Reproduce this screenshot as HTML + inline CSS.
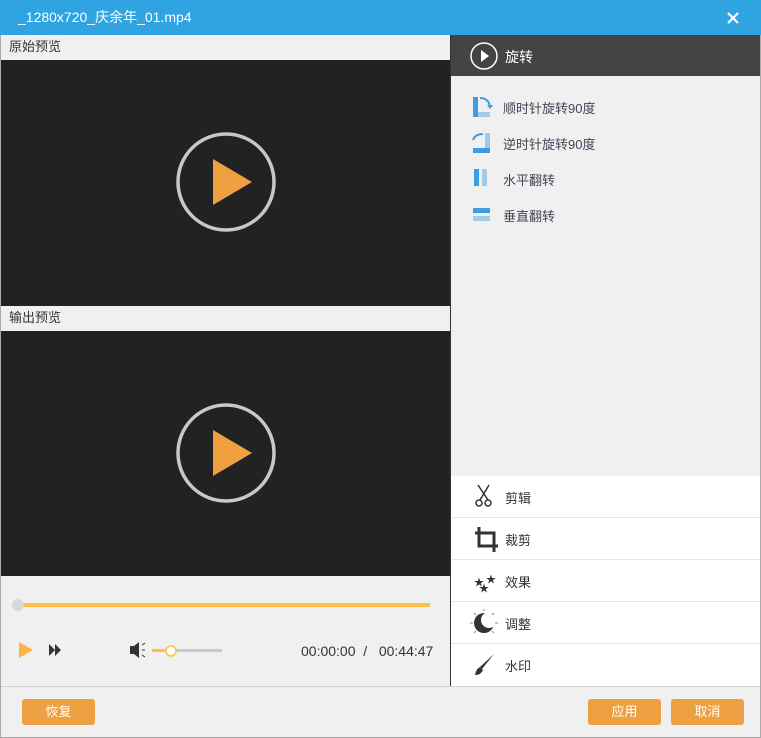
<!DOCTYPE html>
<html><head><meta charset="utf-8"><style>
*{margin:0;padding:0;box-sizing:border-box}
body{width:761px;height:738px;overflow:hidden;background:#f0f0f0;font-family:"Liberation Sans","Noto Sans CJK SC",sans-serif;font-size:13px;color:#333;position:relative}
.a{position:absolute}
</style></head><body>
<div class="a" style="left:0;top:0;width:761px;height:35px;background:#2fa4e0;color:#fff;font-size:14px;line-height:35px;padding-left:18px">_1280x720_庆余年_01.mp4</div>
<svg class="a" style="left:727px;top:12px" width="12" height="12"><path d="M1,1 L11,11 M11,1 L1,11" stroke="#fff" stroke-width="2.2"/></svg>
<div class="a" style="left:0;top:35px;width:1px;height:703px;background:#aaa"></div>
<div class="a" style="right:0;top:35px;width:1px;height:703px;background:#aaa"></div>
<div class="a" style="left:0;bottom:0;width:761px;height:1px;background:#aaa"></div>
<div class="a" style="left:9px;top:37px;line-height:20px">原始预览</div>
<div class="a" style="left:1px;top:60px;width:449px;height:246px;background:#222"></div>
<div class="a" style="left:9px;top:308px;line-height:20px">输出预览</div>
<div class="a" style="left:1px;top:331px;width:449px;height:245px;background:#222"></div>
<svg class="a" style="left:0;top:0" width="450" height="738">
<circle cx="226" cy="182" r="48" fill="none" stroke="#c8c8c8" stroke-width="3.5"/>
<polygon points="213,159 252,182 213,205" fill="#f0a040"/>
<circle cx="226" cy="453" r="48" fill="none" stroke="#c8c8c8" stroke-width="3.5"/>
<polygon points="213,430 252,453 213,476" fill="#f0a040"/>
<rect x="18" y="603" width="412" height="4" fill="#fdbf45"/>
<circle cx="18" cy="605" r="6" fill="#d8d8d8"/>
<polygon points="19,642 33,650 19,658" fill="#fdb34a"/>
<polygon points="49,644 55,650 49,656" fill="#333"/><polygon points="55,644 61,650 55,656" fill="#333"/>
<rect x="130" y="646" width="4" height="8" fill="#333"/><polygon points="134,646 139,642 139,658 134,654" fill="#333"/>
<path d="M142,645 l3,-2 M142,650 h3 M142,655 l3,2" stroke="#333" stroke-width="1"/>
<rect x="152" y="649" width="70" height="3" fill="#c8c8c8"/>
<rect x="152" y="649" width="20" height="3" fill="#fdbf45"/>
<circle cx="171" cy="651" r="5" fill="#fff" stroke="#fdbf45" stroke-width="1.5"/>
</svg>
<div class="a" style="left:301px;top:643px;font-size:14px">00:00:00 &nbsp;/ &nbsp;&nbsp;00:44:47</div>
<div class="a" style="left:1px;top:686px;width:759px;height:1px;background:#d0d0d0"></div>
<div class="a" style="left:22px;top:699px;width:73px;height:26px;background:#eca042;border-radius:3px;color:#fff;text-align:center;line-height:26px">恢复</div>
<div class="a" style="left:588px;top:699px;width:73px;height:26px;background:#eca042;border-radius:3px;color:#fff;text-align:center;line-height:26px">应用</div>
<div class="a" style="left:671px;top:699px;width:73px;height:26px;background:#eca042;border-radius:3px;color:#fff;text-align:center;line-height:26px">取消</div>
<div class="a" style="left:450px;top:35px;width:310px;height:41px;background:#444"></div>
<div class="a" style="left:450px;top:35px;width:1px;height:651px;background:#333"></div>
<div class="a" style="left:505px;top:47px;color:#fff;font-size:14px">旋转</div>
<div class="a" style="left:451px;top:76px;width:309px;height:399px;background:#f0f0f0"></div>
<div class="a" style="left:503px;top:98px;color:#445">顺时针旋转90度</div>
<div class="a" style="left:503px;top:134px;color:#445">逆时针旋转90度</div>
<div class="a" style="left:503px;top:170px;color:#445">水平翻转</div>
<div class="a" style="left:503px;top:206px;color:#445">垂直翻转</div>
<div class="a" style="left:451px;top:476px;width:309px;height:210px;background:#fff"></div>
<div class="a" style="left:451px;top:517px;width:309px;height:1px;background:#e6e6e6"></div>
<div class="a" style="left:451px;top:559px;width:309px;height:1px;background:#e6e6e6"></div>
<div class="a" style="left:451px;top:601px;width:309px;height:1px;background:#e6e6e6"></div>
<div class="a" style="left:451px;top:643px;width:309px;height:1px;background:#e6e6e6"></div>
<div class="a" style="left:505px;top:488px">剪辑</div>
<div class="a" style="left:505px;top:530px">裁剪</div>
<div class="a" style="left:505px;top:572px">效果</div>
<div class="a" style="left:505px;top:614px">调整</div>
<div class="a" style="left:505px;top:656px">水印</div>
<svg class="a" style="left:450px;top:35px" width="311" height="651">
<circle cx="34" cy="21" r="13" fill="none" stroke="#fff" stroke-width="1.5"/>
<polygon points="31,15 39,21 31,27" fill="#fff"/>
<rect x="23" y="62" width="5" height="20" fill="#3e9ddc"/><rect x="28" y="77" width="12" height="5" fill="#9ccbeb"/>
<path d="M30,63 q8,0 10,8" fill="none" stroke="#3e9ddc" stroke-width="2"/><polygon points="37,70 43,70 40,74" fill="#3e9ddc"/>
<rect x="35" y="98" width="5" height="20" fill="#9ccbeb"/><rect x="23" y="113" width="17" height="5" fill="#3e9ddc"/>
<path d="M33,99 q-8,0 -10,6" fill="none" stroke="#3e9ddc" stroke-width="2"/>
<rect x="24" y="134" width="5" height="17" fill="#3e9ddc"/><rect x="32" y="134" width="5" height="17" fill="#9ccbeb"/>
<rect x="23" y="173" width="17" height="5" fill="#3e9ddc"/><rect x="23" y="181" width="17" height="5" fill="#9ccbeb"/>
<g stroke="#333" stroke-width="1.5" fill="none">
<line x1="28" y1="450" x2="38" y2="465"/><line x1="39" y1="450" x2="30" y2="465"/>
<circle cx="29" cy="468" r="3"/><circle cx="38" cy="468" r="3"/>
</g>
<path d="M29,492 v19 h19 M25,498 h19 v19" fill="none" stroke="#333" stroke-width="3"/>
<text x="24" y="551" font-size="10" fill="#333">★</text><text x="36" y="548" font-size="10" fill="#333">★</text><text x="29" y="557" font-size="10" fill="#333">★</text>
<circle cx="34" cy="588" r="10" fill="#333"/><circle cx="39" cy="585" r="8" fill="#fff"/>
<g stroke="#888" stroke-width="1"><line x1="20" y1="588" x2="23" y2="588"/><line x1="45" y1="588" x2="48" y2="588"/><line x1="34" y1="574" x2="34" y2="576"/><line x1="24" y1="578" x2="26" y2="580"/><line x1="44" y1="578" x2="42" y2="580"/><line x1="24" y1="598" x2="26" y2="596"/><line x1="44" y1="598" x2="42" y2="596"/></g>
<path d="M44,619 L32,634 l-2,-2 Z" fill="#333"/><path d="M30,632 q-4,2 -5,8 q6,0 8,-5 Z" fill="#333"/>
</svg>
</body></html>
